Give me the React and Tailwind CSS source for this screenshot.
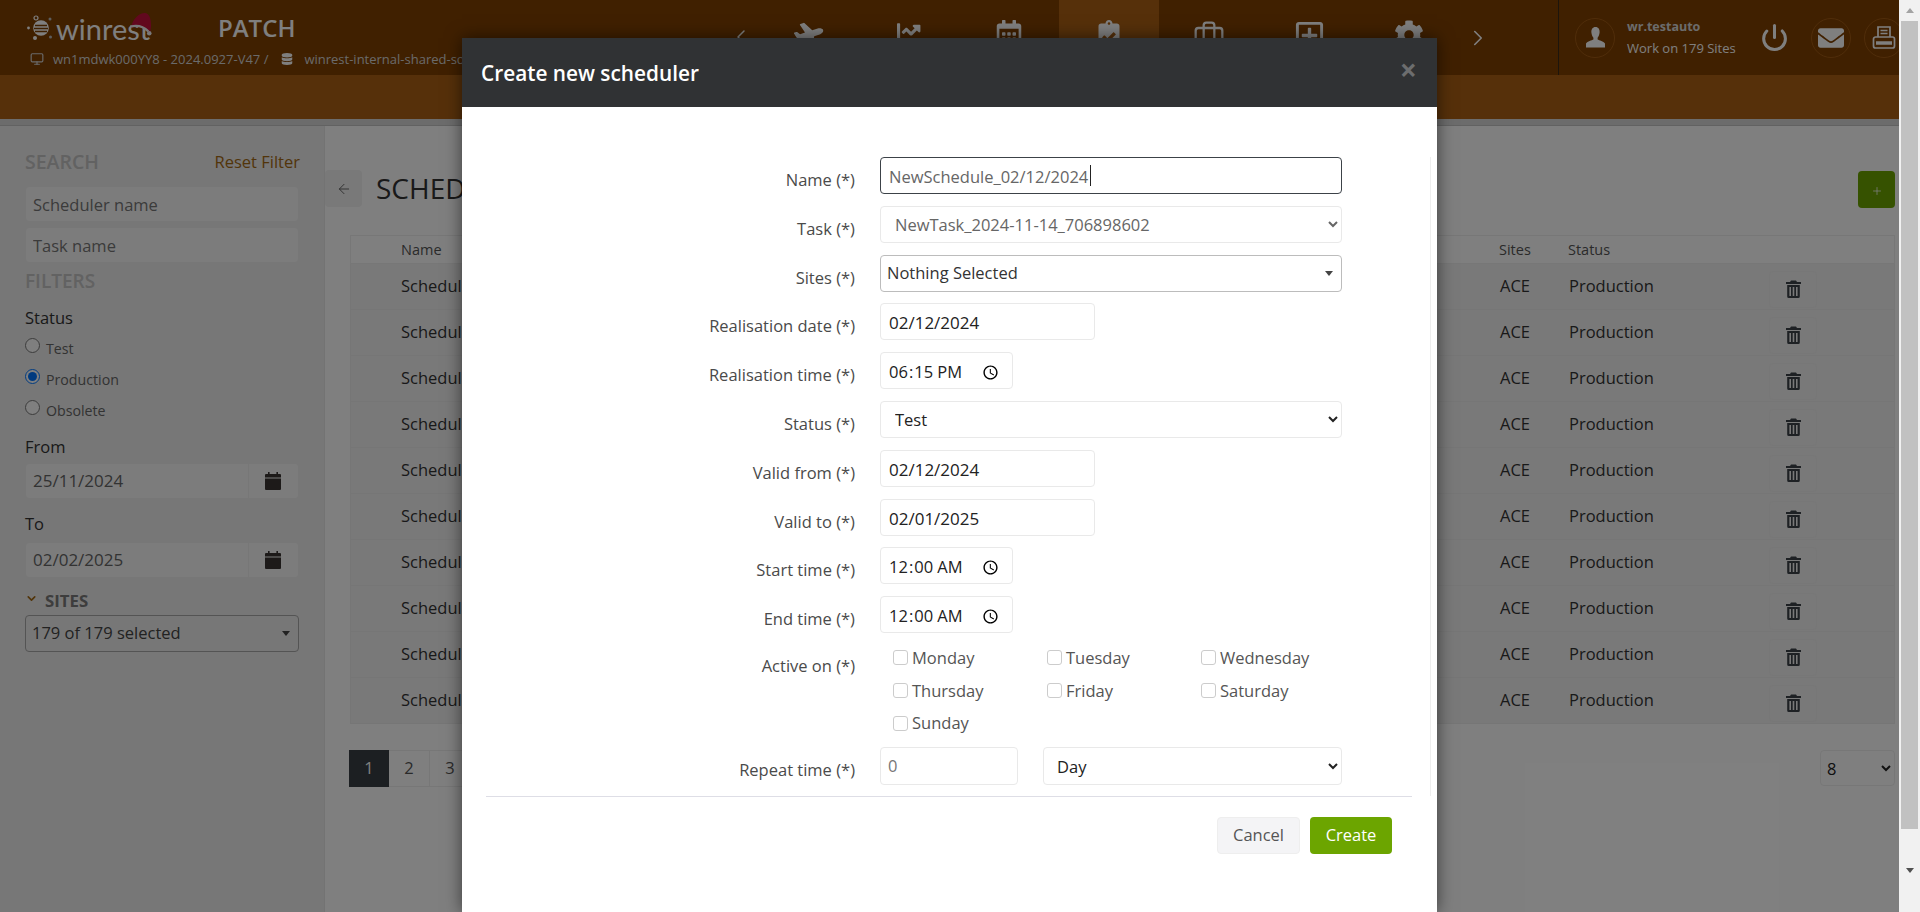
import React from "react";
import { Monitor, Power, ArrowLeft, ChevronLeft, ChevronRight, ChevronDown, Briefcase, Plus } from "lucide-react";
import { FaDatabase, FaEnvelope, FaPlane, FaChartLine, FaRegCalendarAlt, FaClipboardCheck, FaRegPlusSquare, FaCog } from "react-icons/fa";

const Trash = () => (
  <svg width="15" height="18" viewBox="0 0 15 18" className="text-[#3c4248]" fill="currentColor">
    <path d="M5 0.5h5l1 1.5h4v2H0V2h4z" />
    <path fillRule="evenodd" d="M1.2 5h12.6v11.5a1.5 1.5 0 0 1-1.5 1.5H2.7a1.5 1.5 0 0 1-1.5-1.5zM3.4 7v9h1.6V7zM6.7 7v9h1.6V7zM10 7v9h1.6V7z" />
  </svg>
);
const Cal = () => (
  <svg width="16" height="18" viewBox="0 0 16 18" className="text-[#3a3433]" fill="currentColor">
    <path d="M3 0h1.6v2.5H3zM11.4 0H13v2.5h-1.6z" />
    <path d="M1 2h14a1 1 0 0 1 1 1v2.6H0V3a1 1 0 0 1 1-1zM0 6.4h16V17a1 1 0 0 1-1 1H1a1 1 0 0 1-1-1z" />
  </svg>
);
const Bust = () => (
  <svg width="21" height="21" viewBox="0 0 21 21" fill="currentColor">
    <path d="M10.5 0c2.9 0 4.4 2.300 4.100 5.600-.2 2.300-1 4-2 5.200v1.700c1.500.9 6 1.900 7.400 3.900V20.500H1v-4.100c1.400-2 5.900-3 7.400-3.900v-1.700c-1-1.200-1.800-2.900-2-5.200C6.100 2.300 7.600 0 10.500 0z" />
  </svg>
);
const Printer = () => (
  <svg width="24" height="24" viewBox="0 0 24 24" fill="none" stroke="currentColor" strokeWidth="1.7">
    <path d="M6 11V1h12v10" />
    <path d="M8.500 4.500h7M8.500 7.500h7" />
    <path d="M3.500 11h17a2 2 0 0 1 2 2v7a2 2 0 0 1-2 2h-17a2 2 0 0 1-2-2v-7a2 2 0 0 1 2-2z" />
    <path d="M4 17h16" strokeWidth="3.500" />
  </svg>
);
const Logo = () => (
  <div className="flex items-center w-[134px] h-[28px] relative">
    <svg width="26" height="26" viewBox="0 0 26 26" className="shrink-0 text-white">
      <circle cx="1.500" cy="13" r="1.400" fill="currentColor" />
      <circle cx="9" cy="3" r="2" fill="none" stroke="currentColor" strokeWidth="1.200" />
      <circle cx="8" cy="23" r="2" fill="currentColor" />
      <circle cx="23" cy="4" r="1.500" fill="#bbbbbb" />
      <circle cx="23.500" cy="22" r="1.500" fill="#bbbbbb" />
      <circle cx="14" cy="13" r="7.800" fill="currentColor" />
      <path d="M8 10.500h12M7 13.500h14M8 16.500h12" stroke="#804000" strokeWidth="1.300" />
    </svg>
    <span className="ml-[3px] text-[29px] leading-none font-normal text-white font-['Lato','Open_Sans',sans-serif]">winrest</span>
    <svg width="22" height="24" viewBox="0 0 24 24" className="absolute left-[103px] top-[-2px]">
      <path d="M1 16C3 6 10 0 16 0c5 0 7 6 7 14l-1 8c-5-6-13-8-21-6z" fill="#c4103c" />
      <circle cx="21" cy="22" r="2.500" fill="#f0f0f0" />
      <path d="M0 15c7-2 14-1 20 5" stroke="#f0f0f0" strokeWidth="2.500" fill="none" />
    </svg>
  </div>
);

const NAV = [
  { icon: <FaPlane size={29} className="-rotate-[18deg]" /> },
  { icon: <FaChartLine size={25} /> },
  { icon: <FaRegCalendarAlt size={28} /> },
  { icon: <FaClipboardCheck size={28} />, active: true },
  { icon: <Briefcase size={32} strokeWidth={1.700} /> },
  { icon: <FaRegPlusSquare size={31} /> },
  { icon: <FaCog size={30} /> },
];

function Header() {
  return (
    <header>
      <div className="h-[75px] bg-[#804000] flex text-white">
        <div className="w-[722px] shrink-0 pl-[27px] pt-[14px] overflow-hidden">
          <div className="flex items-center">
            <Logo />
            <span className="ml-[57px] text-[24px] leading-[28px] font-semibold text-[#ffffff]">PATCH</span>
          </div>
          <div className="flex items-center mt-[8px] text-[13px] leading-[18px] text-[#d4d4d4] whitespace-nowrap">
            <Monitor size={14} className="ml-[3px]" />
            <span className="ml-[9px]">wn1mdwk000YY8 - 2024.0927-V47 /</span>
            <FaDatabase size={12} className="ml-[13px] text-white" />
            <span className="ml-[11px]">winrest-internal-shared-sql</span>
          </div>
        </div>
        <div className="w-[37px] flex items-center justify-center pb-[2px]"><ChevronLeft size={24} strokeWidth={1.500} /></div>
        {NAV.map((n, i) => (
          <div key={i} className={"w-[100px] flex justify-center pt-[20px] " + (n.active ? "bg-[#ac6014]" : "")}>
            {n.icon}
          </div>
        ))}
        <div className="w-[38px] flex items-center justify-center"><ChevronRight size={26} strokeWidth={1.500} /></div>
        <div className="w-[61px]" />
        <div className="flex-1 border-l border-[#3a2a18] flex items-center pl-[16px] overflow-hidden">
          <div className="w-[40px] h-[40px] rounded-full border border-[#a05a14] flex items-center justify-center shrink-0"><Bust /></div>
          <div className="ml-[12px] w-[124px] shrink-0">
            <div className="text-[12.5px] leading-[18px] font-bold text-[#d8d8d8]">wr.testauto</div>
            <div className="text-[13px] leading-[18px] mt-[3px] text-white whitespace-nowrap">Work on 179 Sites</div>
          </div>
          <Power size={29} strokeWidth={2.500} className="ml-[9px] shrink-0" />
          <div className="w-[40px] h-[40px] rounded-full border border-[#a05a14] flex items-center justify-center shrink-0 ml-[22px]"><FaEnvelope size={26} /></div>
          <div className="w-[40px] h-[40px] rounded-full border border-[#a05a14] flex items-center justify-center shrink-0 ml-[13px]"><Printer /></div>
        </div>
      </div>
      <div className="h-[44px] bg-[#ac6014]" />
      <div className="h-[7px] bg-[#d8d8d8] border-b border-[#c4c4c4]" />
    </header>
  );
}

const sideInput = "w-full h-[36px] px-[7px] bg-[#f9f9f9] border border-[#eeeeee] rounded-[4px] text-[16.500px] text-[#666666] placeholder:text-[#777777] outline-none";

function Sidebar() {
  return (
    <aside className="w-[325px] shrink-0 bg-[#eeeeee] border-r border-[#e6e6e6] pl-[25px] pr-[25px] pt-[24px]">
      <div className="flex justify-between items-center h-[24px]">
        <span className="text-[19.500px] font-semibold text-[#c4c4c4]">SEARCH</span>
        <span className="text-[16.500px] text-[#a56a14] mr-[-1px]">Reset Filter</span>
      </div>
      <input className={sideInput + " mt-[12px]"} placeholder="Scheduler name" />
      <input className={sideInput + " mt-[5px]"} placeholder="Task name" />
      <div className="text-[19px] leading-[24px] font-semibold text-[#c4c4c4] mt-[6px]">FILTERS</div>
      <div className="text-[16.500px] leading-[22px] text-[#333333] mt-[14px]">Status</div>
      <div className="flex flex-col text-[14.200px] text-[#666666] mt-[1px]">
        {["Test", "Production", "Obsolete"].map((s, i) => (
          <label key={s} className="flex items-center h-[31px]">
            <input type="radio" name="st" defaultChecked={i === 1} className="w-[15px] h-[15px] m-0 accent-[#0075ff]" />
            <span className="ml-[6px] mt-[6px]">{s}</span>
          </label>
        ))}
      </div>
      <div className="text-[16.500px] leading-[22px] text-[#333333] mt-[13px]">From</div>
      <DateField value="25/11/2024" cls="mt-[5px]" />
      <div className="text-[16.500px] leading-[22px] text-[#333333] mt-[14px]">To</div>
      <DateField value="02/02/2025" cls="mt-[7px]" />
      <div className="flex items-center mt-[12px] h-[22px]">
        <ChevronDown size={13} strokeWidth={3} className="text-[#a56a14] mt-[-5px]" />
        <span className="ml-[7px] text-[16.800px] font-bold text-[#7a7a7a]">SITES</span>
      </div>
      <div className="mt-[3px] h-[37px] border border-[#a8a8a8] rounded-[4px] flex items-center justify-between pl-[6px] pr-[8px] text-[16.500px] text-[#444444] bg-[#eeeeee]">
        179 of 179 selected
        <span className="w-0 h-0 border-x-[4px] border-x-transparent border-t-[5px] border-t-[#444444]" />
      </div>
    </aside>
  );
}
function DateField({ value, cls }) {
  return (
    <div className={"flex h-[36px] " + cls}>
      <input readOnly value={value} className="w-[224px] px-[7px] bg-[#f9f9f9] border border-[#eeeeee] rounded-l-[4px] text-[17px] text-[#666666] outline-none" />
      <div className="flex-1 bg-[#f9f9f9] border border-l-0 border-[#eeeeee] rounded-r-[4px] flex items-center justify-center pr-[1px]"><Cal /></div>
    </div>
  );
}

function Main() {
  const rows = Array.from({ length: 10 }, (_, i) => i);
  return (
    <main className="flex-1 bg-white pt-[44px] pl-0 pr-[4px] relative">
      <div className="flex items-center h-[37px]">
        <div className="w-[37px] h-[37px] bg-[#f3f3f3] rounded-[4px] flex items-center justify-center text-[#666666]"><ArrowLeft size={16} strokeWidth={1.500} /></div>
        <h1 className="ml-[14px] text-[28px] leading-[37px] text-[#333333]">SCHEDULERS</h1>
        <div className="ml-auto w-[37px] h-[37px] bg-[#6ca500] rounded-[4px] flex items-center justify-center text-white mt-[1px]"><Plus size={12} strokeWidth={1.500} className="mt-[3px]" /></div>
      </div>
      <div className="ml-[25px] mt-[28px]">
        <div className="h-[29px] flex items-center border border-b-[#eeeeee] border-[#efefef] text-[14.500px] text-[#555555]">
          <span className="pl-[50px] flex-1">Name</span>
          <span className="w-[69px]">Sites</span>
          <span className="w-[326px]">Status</span>
        </div>
        {rows.map((i) => (
          <div key={i} className="h-[46px] flex items-center border-b border-x border-[#ededed] bg-[#f2f2f2] text-[16.500px] text-[#333333]">
            <span className="pl-[50px] flex-1">Scheduler_{i + 1}</span>
            <span className="w-[69px]">ACE</span>
            <span className="w-[200px]">Production</span>
            <div className="w-[48px] h-[37px] mt-[5px] border border-[#efefef] rounded-[4px] flex items-center justify-center"><Trash /></div>
            <span className="w-[77px]" />
          </div>
        ))}
      </div>
      <div className="ml-[24px] mt-[26px] flex items-start">
        <span className="w-[40px] h-[37px] bg-[#383e44] text-white text-[16.500px] flex items-center justify-center">1</span>
        {["2", "3", "4"].map((p) => (
          <span key={p} className="w-[41px] h-[37px] border border-l-0 border-[#eeeeee] text-[#555555] text-[16.500px] flex items-center justify-center">{p}</span>
        ))}
        <select defaultValue="8" className="ml-auto w-[75px] h-[36px] mr-0 pl-[2px] bg-white border border-[#eeeeee] rounded-[4px] text-[16.500px] text-[#222222]">
          <option>8</option>
        </select>
      </div>
    </main>
  );
}

const fieldBase = "h-[37px] bg-white border rounded-[4px] text-[16.500px] outline-none";
const field = fieldBase + " border-[#e9e9e9]";
function Row({ label, children }) {
  return (
    <div className="grid grid-cols-[369px_462px] gap-x-[25px]">
      <label className="text-right text-[16.500px] leading-[22px] text-[#4a4a4a] pt-[12px]">{label}</label>
      <div>{children}</div>
    </div>
  );
}
function TextF({ value }) {
  return <input readOnly value={value} className={field + " block pl-[8px] pr-[7px] pt-[2px] w-[215px] text-[17px] text-[#222222]"} />;
}
function TimeF({ value }) {
  return <input type="time" defaultValue={value} className={field + " block w-[133px] pl-[7px] pr-[10px] pt-[3px] text-[#222222]"} />;
}
function Modal() {
  const days = ["Monday", "Tuesday", "Wednesday", "Thursday", "Friday", "Saturday", "Sunday"];
  return (
    <div className="absolute inset-0 bg-black/50 flex justify-center items-start pt-[38px] overflow-hidden">
      <section className="w-[975px] h-[874px] bg-white shadow-[0_0_16px_rgba(0,0,0,0.55)] shrink-0">
        <div className="h-[69px] bg-[#303234] flex items-center justify-between pl-[19px] pr-[20px]">
          <h2 className="text-[20.800px] font-semibold text-white leading-none mt-[2px]">Create new scheduler</h2>
          <span className="text-[30px] leading-none font-bold text-[#6c6d6e] mb-[5px]">×</span>
        </div>
        <div className="pt-[50px]">
          <div className="w-[969px] h-[639px] border-r border-[#eeeeee] pl-[24px] flex flex-col gap-y-[11.800px] overflow-hidden">
            <Row label="Name (*)">
              <div className="relative">
                <input readOnly value="NewSchedule_02/12/2024" className={fieldBase + " block w-full pl-[8px] pr-[7px] pt-[1px] border-[#3c4248] text-[#666666]"} />
                <span className="absolute left-[210px] top-[8px] w-px h-[21px] bg-[#222222]" />
              </div>
            </Row>
            <Row label="Task (*)">
              <select defaultValue="t" className={field + " block w-full px-[10px] pt-[1px] text-[#666666]"}>
                <option value="t">NewTask_2024-11-14_706898602</option>
              </select>
            </Row>
            <Row label="Sites (*)">
              <div className="h-[37px] border border-[#bcbcbc] rounded-[4px] flex items-center justify-between pl-[6px] pr-[8px] text-[16.500px] text-[#333333]">
                Nothing Selected
                <span className="w-0 h-0 border-x-[4px] border-x-transparent border-t-[5px] border-t-[#444444]" />
              </div>
            </Row>
            <Row label="Realisation date (*)"><TextF value="02/12/2024" /></Row>
            <Row label="Realisation time (*)"><TimeF value="18:15" /></Row>
            <Row label="Status (*)">
              <select defaultValue="Test" className={field + " block w-full px-[10px] pt-[1px] text-[#222222]"}>
                <option>Test</option>
              </select>
            </Row>
            <Row label="Valid from (*)"><TextF value="02/12/2024" /></Row>
            <Row label="Valid to (*)"><TextF value="02/01/2025" /></Row>
            <Row label="Start time (*)"><TimeF value="00:00" /></Row>
            <Row label="End time (*)"><TimeF value="00:00" /></Row>
            <div className="grid grid-cols-[369px_462px] gap-x-[25px] mt-[-1px]">
              <label className="text-right text-[16.500px] leading-[22px] text-[#4a4a4a] pt-[11px]">Active on (*)</label>
              <div className="grid grid-cols-[154px_154px_1fr] pl-[13px] auto-rows-[32.700px] text-[16.500px] text-[#555555]">
                {days.map((d) => (
                  <label key={d} className="flex items-center h-[28px]">
                    <span className="w-[15px] h-[15px] border border-[#cccccc] rounded-[3px] bg-white shrink-0" />
                    <span className="ml-[4px] mt-[1px]">{d}</span>
                  </label>
                ))}
              </div>
            </div>
            <div className="grid grid-cols-[369px_138px_299px] gap-x-[25px] mt-[-7px]">
              <label className="text-right text-[16.500px] leading-[22px] text-[#4a4a4a] pt-[12px]">Repeat time (*)</label>
              <input readOnly value="0" className={field + " h-[38px] px-[7px] text-[#777777] w-[138px]"} />
              <select defaultValue="Day" className={field + " h-[38px] pl-[9px] pr-[10px] pt-[1px] text-[#222222]"}>
                <option>Day</option>
              </select>
            </div>
          </div>
          <div className="ml-[24px] w-[926px] border-t border-[#dedee6]" />
          <div className="flex justify-end gap-x-[10px] pr-[45px] pt-[20px]">
            <button className="w-[83px] h-[37px] bg-[#f4f4f6] border border-[#eeeeee] rounded-[4px] text-[16.500px] text-[#555555]">Cancel</button>
            <button className="w-[82px] h-[37px] bg-[#6ca500] rounded-[4px] text-[16.500px] text-white">Create</button>
          </div>
        </div>
      </section>
    </div>
  );
}

function Scrollbar() {
  return (
    <div className="w-[21px] h-full bg-[#f1f1f1] flex flex-col items-center shrink-0">
      <div className="h-[21px] flex items-center justify-center"><span className="w-0 h-0 border-x-[4.500px] border-x-transparent border-b-[5px] border-b-[#a3a3a3]" /></div>
      <div className="w-[17px] h-[808px] bg-[#c1c1c1]" />
      <div className="flex-1 flex items-center justify-center"><span className="w-0 h-0 border-x-[4.500px] border-x-transparent border-t-[5px] border-t-[#505050]" /></div>
    </div>
  );
}

export default function App() {
  return (
    <div className="w-[1920px] h-[912px] flex overflow-hidden font-['Open_Sans','Noto_Sans',sans-serif]">
      <div className="w-[1899px] h-full relative overflow-hidden flex flex-col bg-white">
        <Header />
        <div className="flex flex-1">
          <Sidebar />
          <Main />
        </div>
        <Modal />
      </div>
      <Scrollbar />
    </div>
  );
}
